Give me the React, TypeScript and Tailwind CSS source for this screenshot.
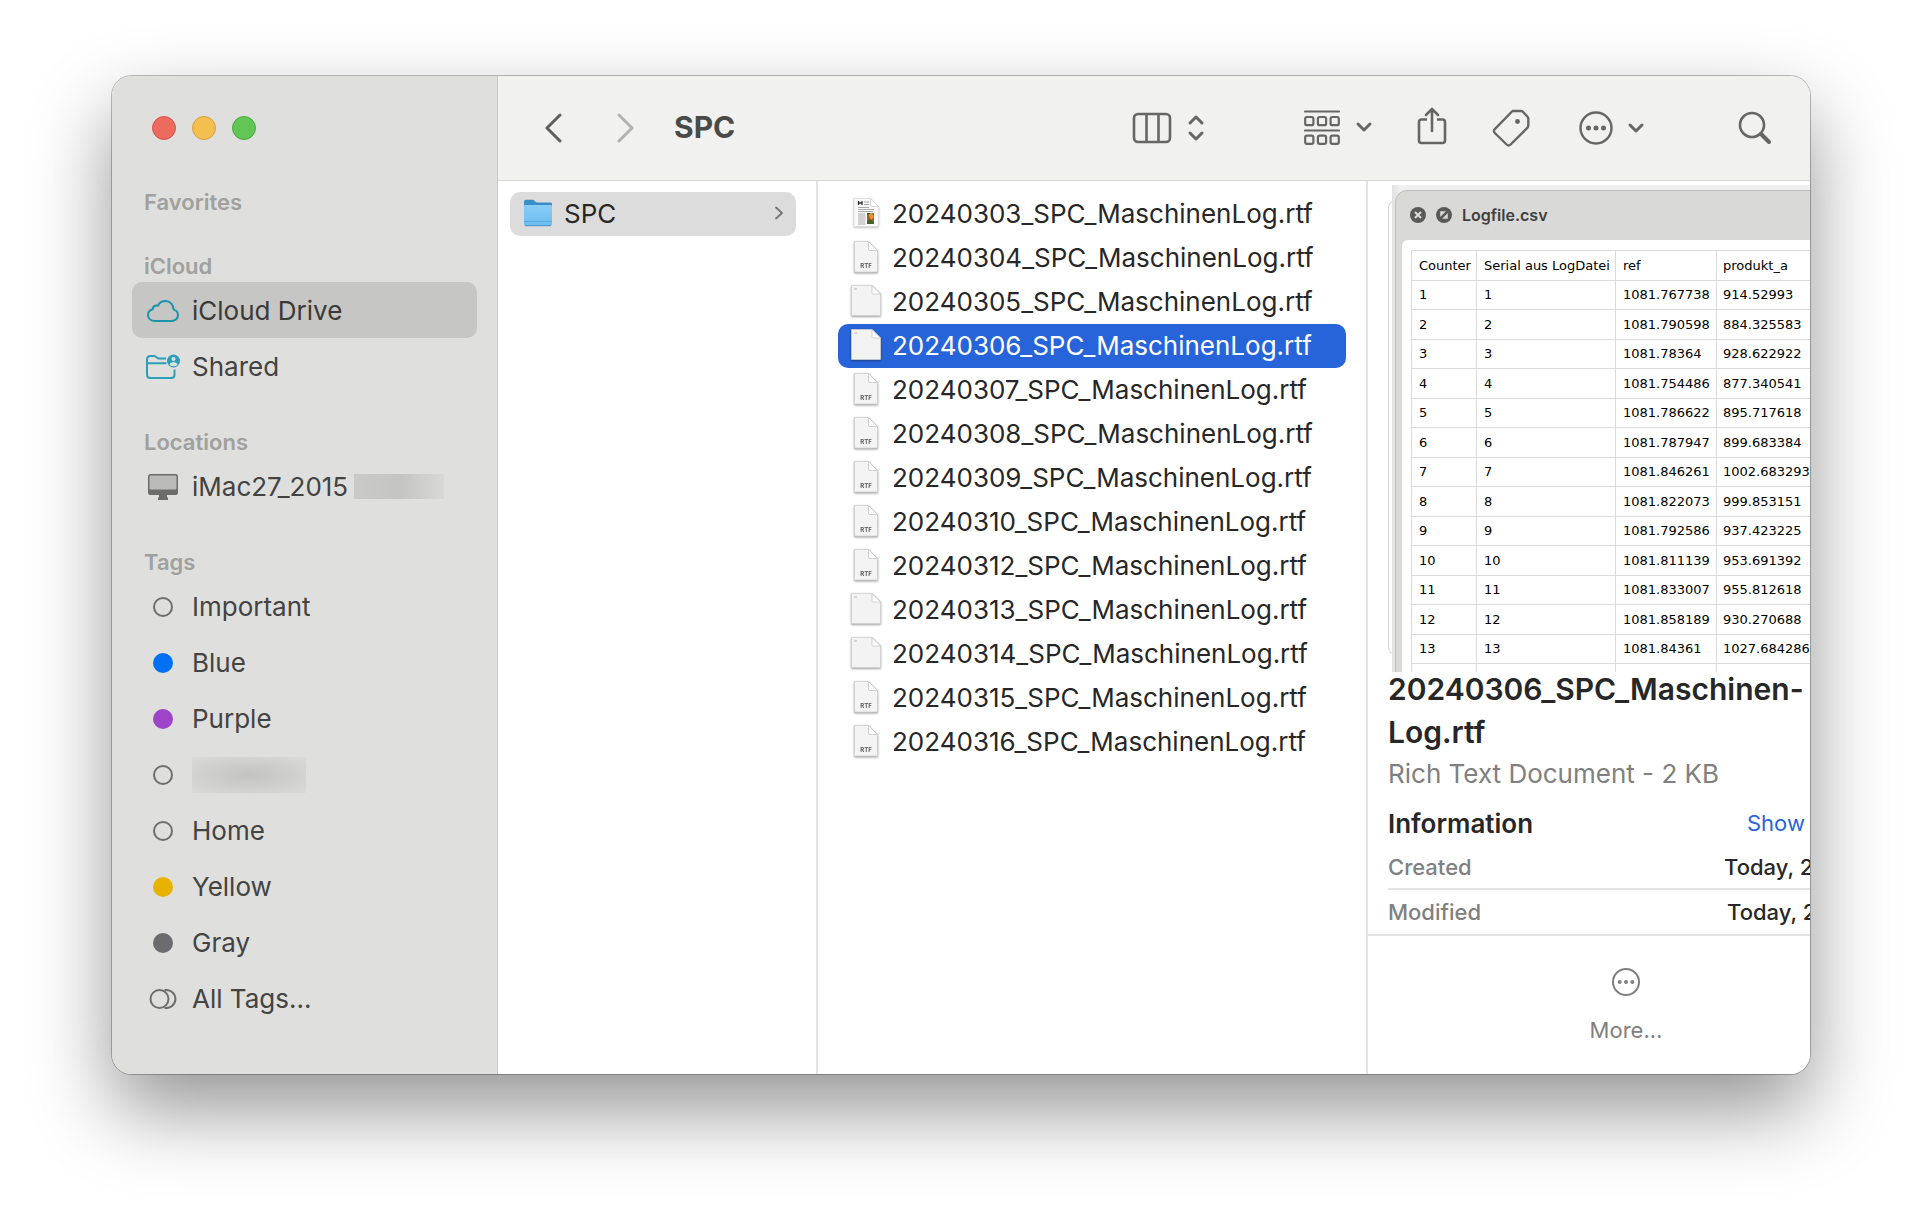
import { useState } from 'react';
import type { ReactNode } from 'react';

type FileKind = 'article' | 'rtf' | 'wide';

interface LogFile {
    name: string;
    kind: FileKind;
}

interface SidebarItem {
    label: string;
    icon: ReactNode;
    redacted?: 'text' | 'suffix';
}

const files: LogFile[] = [
    { name: '20240303_SPC_MaschinenLog.rtf', kind: 'article' },
    { name: '20240304_SPC_MaschinenLog.rtf', kind: 'rtf' },
    { name: '20240305_SPC_MaschinenLog.rtf', kind: 'wide' },
    { name: '20240306_SPC_MaschinenLog.rtf', kind: 'wide' },
    { name: '20240307_SPC_MaschinenLog.rtf', kind: 'rtf' },
    { name: '20240308_SPC_MaschinenLog.rtf', kind: 'rtf' },
    { name: '20240309_SPC_MaschinenLog.rtf', kind: 'rtf' },
    { name: '20240310_SPC_MaschinenLog.rtf', kind: 'rtf' },
    { name: '20240312_SPC_MaschinenLog.rtf', kind: 'rtf' },
    { name: '20240313_SPC_MaschinenLog.rtf', kind: 'wide' },
    { name: '20240314_SPC_MaschinenLog.rtf', kind: 'wide' },
    { name: '20240315_SPC_MaschinenLog.rtf', kind: 'rtf' },
    { name: '20240316_SPC_MaschinenLog.rtf', kind: 'rtf' },
];

const logRows = [
    ['1081.767738', '914.52993'],
    ['1081.790598', '884.325583'],
    ['1081.78364', '928.622922'],
    ['1081.754486', '877.340541'],
    ['1081.786622', '895.717618'],
    ['1081.787947', '899.683384'],
    ['1081.846261', '1002.683293'],
    ['1081.822073', '999.853151'],
    ['1081.792586', '937.423225'],
    ['1081.811139', '953.691392'],
    ['1081.833007', '955.812618'],
    ['1081.858189', '930.270688'],
    ['1081.84361', '1027.684286'],
];

const CloudIcon = () => (
    <svg width="34" height="24" viewBox="0 0 34 24" fill="none" stroke="#1a93ab" strokeWidth="2" strokeLinejoin="round">
        <path d="M9 22H25.500C29.300 22 32 19.400 32 16.200C32 13.300 30 11.200 27.600 10.600C27.500 5.600 24 2 19.400 2C15.800 2 13.200 3.900 12 6.700C9.300 5.900 6.900 7.500 6.600 10.300C4 11 2 13.100 2 16C2 19.500 4.900 22 9 22Z" />
    </svg>
);

const SharedIcon = () => (
    <svg width="34" height="26" viewBox="0 0 34 26" fill="none" stroke="#2a9fb8" strokeWidth="2">
        <path d="M20 4.500H12.500L9.500 2.500C9 2.200 8.500 2 8 2H4.500C2.500 2 1 3.300 1 5.500V20.500C1 22.500 2.500 24 4.500 24H25C27 24 28.500 22.500 28.500 20.500V15.500M1 9.200H20.500" />
        <circle cx="27.500" cy="7" r="6.500" fill="#2a9fb8" stroke="none" />
        <circle cx="27.500" cy="5" r="2.100" fill="#dfdfdd" stroke="none" />
        <path d="M23.500 11C24 8.800 25.600 8 27.500 8S31 8.800 31.500 11C29.500 12.600 25.500 12.600 23.500 11Z" fill="#dfdfdd" stroke="none" />
    </svg>
);

const MacIcon = () => (
    <svg width="32" height="28" viewBox="0 0 32 28">
        <rect x="1" y="1" width="30" height="21" rx="2.500" fill="#6c6c6b" />
        <rect x="2.500" y="2.500" width="27" height="14" rx="1" fill="#bbbbba" />
        <path d="M12 22H20V24.500H21V27H11V24.500H12Z" fill="#6c6c6b" />
    </svg>
);

const Dot = ({ color }: { color?: string }) => (
    <svg width="20" height="20" viewBox="0 0 20 20">
        {color ? <circle cx="10" cy="10" r="10" fill={color} /> : <circle cx="10" cy="10" r="9" fill="none" stroke="#6e6e6d" strokeWidth="2" />}
    </svg>
);

const AllTagsIcon = () => (
    <svg width="28" height="20" viewBox="0 0 28 20" fill="none" stroke="#6e6e6d" strokeWidth="2">
        <circle cx="10.500" cy="10" r="9" />
        <path d="M15.500 1.200A9 9 0 1 1 15.500 18.800" />
    </svg>
);

const ChevronDown = () => (
    <svg width="18" height="12" viewBox="0 0 18 12" fill="none" stroke="#666664" strokeWidth="3" strokeLinecap="round" strokeLinejoin="round">
        <path d="M3 3L9 9L15 3" />
    </svg>
);

const FolderIcon = () => (
    <svg width="30" height="30" viewBox="0 0 30 30">
        <defs>
            <linearGradient id="folder" x1="0" y1="0" x2="0" y2="1">
                <stop offset="0" stopColor="#87cdf8" />
                <stop offset="1" stopColor="#6cbdf0" />
            </linearGradient>
        </defs>
        <path d="M1 4C1 2.500 1.700 1.700 3 1.700H10C11.500 1.700 12 4.500 14 4.500H27.500C28.500 4.500 29 5 29 6V12H1Z" fill="#3a8ec9" />
        <path d="M1 8.500C1 7.500 1.500 7 2.500 7H27.500C28.500 7 29 7.500 29 8.500V26C29 27.300 28.300 28 27 28H3C1.700 28 1 27.300 1 26Z" fill="url(#folder)" />
        <path d="M1.300 23.500H28.700" stroke="#58a9de" />
        <path d="M2 27.700H28" stroke="#4d93c4" />
    </svg>
);

const FileIcon = ({ kind }: { kind: FileKind }) => {
    if (kind === 'wide') {
        return (
            <svg width="32" height="34" viewBox="0 0 32 34" className="drop-shadow-[0_1px_1px_rgba(0,0,0,0.4)]">
                <path d="M1.500 1.500H22L30.500 10V31.500H1.500Z" fill="#f3f3f3" stroke="#d0d0d0" strokeWidth="0.800" />
                <path d="M22 1.500V8.500Q22 10 23.500 10H30.500Z" fill="#fff" stroke="#c4c4c4" strokeWidth="0.800" />
                <path d="M4 5H7" stroke="#b5b5b5" />
            </svg>
        );
    }
    if (kind === 'article') {
        return (
            <svg width="28" height="32" viewBox="0 0 28 32" className="drop-shadow-[0_1px_1px_rgba(0,0,0,0.25)]">
                <path d="M2 1.500H18.500L26.500 9.500V29.500H2Z" fill="#fafafa" stroke="#dcdcdc" strokeWidth="0.800" />
                <path d="M18.500 1.500V8Q18.500 9.500 20 9.500H26.500Z" fill="#fff" stroke="#d0d0d0" strokeWidth="0.800" />
                <path d="M6.500 4V8M10 4V8M6.500 6H10" stroke="#333" strokeWidth="1.300" />
                <path d="M12 5H17M12 7.500H17M6 10.500H17M6 12.500H22M6 14.500H21M6 17H13.500M6 19H13.500M6 21H13.500M6 23H13.500M6 25H13.500M6 27H13.500" stroke="#a9a9a9" />
                <path d="M15 16H22V27H15Z" fill="#a4631f" />
                <path d="M16 17L20 16L22 20L19 23Z" fill="#e8922a" />
                <path d="M15 16H18L16 19ZM15 24L18 22L22 25V27H15Z" fill="#47612c" />
            </svg>
        );
    }
    return (
        <svg width="26" height="34" viewBox="0 0 26 34" className="drop-shadow-[0_1px_1px_rgba(0,0,0,0.4)]">
            <path d="M1.500 1.500H15.500L24.500 10.500V32H1.500Z" fill="#f4f4f4" stroke="#cecece" strokeWidth="0.800" />
            <path d="M15.500 1.500V9Q15.500 10.500 17 10.500H24.500Z" fill="#fff" stroke="#c4c4c4" strokeWidth="0.800" />
            <text x="13" y="28" textAnchor="middle" fontSize="6" fontWeight="700" fill="#5a5a5a">RTF</text>
        </svg>
    );
};

const sections: { title: string; items: SidebarItem[] }[] = [
    { title: 'Favorites', items: [] },
    {
        title: 'iCloud',
        items: [
            { label: 'iCloud Drive', icon: <CloudIcon /> },
            { label: 'Shared', icon: <SharedIcon /> },
        ],
    },
    { title: 'Locations', items: [{ label: 'iMac27_2015', icon: <MacIcon />, redacted: 'suffix' }] },
    {
        title: 'Tags',
        items: [
            { label: 'Important', icon: <Dot /> },
            { label: 'Blue', icon: <Dot color="#0070f5" /> },
            { label: 'Purple', icon: <Dot color="#9d44c8" /> },
            { label: '', icon: <Dot />, redacted: 'text' },
            { label: 'Home', icon: <Dot /> },
            { label: 'Yellow', icon: <Dot color="#e7b200" /> },
            { label: 'Gray', icon: <Dot color="#6c6c70" /> },
            { label: 'All Tags...', icon: <AllTagsIcon /> },
        ],
    },
];

const Sidebar = () => {
    const [active, setActive] = useState('iCloud Drive');

    return (
        <aside className="w-[386px] shrink-0 bg-[#dfdfdd] border-r border-[#c9c9c7] px-5 pt-10 pb-12">
            <div className="flex gap-4 pl-5">
                <button aria-label="Close" className="size-6 rounded-full bg-[#ed6a5f] border border-[#d5544a]" />
                <button aria-label="Minimize" className="size-6 rounded-full bg-[#f5bf50] border border-[#d8a13c]" />
                <button aria-label="Zoom" className="size-6 rounded-full bg-[#62c656] border border-[#4ca93f]" />
            </div>

            <nav className="mt-[46px] flex flex-col gap-8">
                {sections.map(section => (
                    <section key={section.title}>
                        <h2 className="h-8 leading-8 pl-3 text-[22px] font-semibold text-[#a0a09e]">{section.title}</h2>
                        {section.items.map((item, i) => (
                            <button
                                key={i}
                                aria-label={item.label || 'Tag'}
                                onClick={() => setActive(item.label)}
                                className={`w-full h-14 pl-[14px] pt-px flex items-center rounded-[10px] text-[26px] text-left ${item.label === active ? 'bg-[#c6c6c4] text-[#3a3a39]' : 'text-[#434342]'}`}
                            >
                                <span className="w-[34px] mr-3 flex justify-center shrink-0">{item.icon}</span>
                                {item.label}
                                {item.redacted === 'suffix' && <span className="ml-[6px] w-[90px] h-[25px] bg-linear-to-r from-[#cacac8] via-[#c4c4c2] to-[#d8d8d6]" />}
                                {item.redacted === 'text' && <span className="w-[114px] h-9 bg-radial from-[#c3c3c1] to-[#dadad8]" />}
                            </button>
                        ))}
                    </section>
                ))}
            </nav>
        </aside>
    );
};

const Toolbar = () => (
    <header className="h-[105px] shrink-0 flex items-center bg-[#f1f1ef] border-b border-[#d6d6d5] pl-[46px] pr-[38px] pb-px">
        <button aria-label="Back">
            <svg width="18" height="30" viewBox="0 0 18 30" fill="none" stroke="#5f5f5e" strokeWidth="3" strokeLinecap="round" strokeLinejoin="round">
                <path d="M16 2L3 15L16 28" />
            </svg>
        </button>
        <button aria-label="Forward" className="ml-[55px]">
            <svg width="18" height="30" viewBox="0 0 18 30" fill="none" stroke="#b3b3b2" strokeWidth="3" strokeLinecap="round" strokeLinejoin="round">
                <path d="M2 2L15 15L2 28" />
            </svg>
        </button>
        <h1 className="ml-[39px] text-[30px] font-bold text-[#4a4a49]">SPC</h1>

        <button aria-label="View as columns" className="ml-auto flex items-center gap-[15px]">
            <svg width="40" height="32" viewBox="0 0 40 32" fill="none" stroke="#666664" strokeWidth="2.600">
                <rect x="2" y="2" width="36" height="28" rx="4" />
                <path d="M14.500 2V30M26.500 2V30" />
            </svg>
            <svg width="18" height="28" viewBox="0 0 18 28" fill="none" stroke="#666664" strokeWidth="3" strokeLinecap="round" strokeLinejoin="round">
                <path d="M3 9L9 3L15 9M3 19L9 25L15 19" />
            </svg>
        </button>
        <button aria-label="Group" className="mb-[2px] ml-[99px] flex items-center gap-[15px]">
            <svg width="36" height="36" viewBox="0 0 36 36" fill="none" stroke="#666664" strokeWidth="2.200">
                <path d="M1 2.500H35M1 21.500H35" strokeLinecap="round" />
                <rect x="1.200" y="8" width="8.200" height="8.200" rx="1.800" />
                <rect x="13.900" y="8" width="8.200" height="8.200" rx="1.800" />
                <rect x="26.600" y="8" width="8.200" height="8.200" rx="1.800" />
                <rect x="1.200" y="26.700" width="8.200" height="8.200" rx="1.800" />
                <rect x="13.900" y="26.700" width="8.200" height="8.200" rx="1.800" />
                <rect x="26.600" y="26.700" width="8.200" height="8.200" rx="1.800" />
            </svg>
            <ChevronDown />
        </button>
        <button aria-label="Share" className="ml-11 mb-1">
            <svg width="30" height="38" viewBox="0 0 30 38" fill="none" stroke="#666664" strokeWidth="2.600" strokeLinecap="round" strokeLinejoin="round">
                <path d="M10 12.500H4.500C3 12.500 2 13.500 2 15V33.500C2 35 3 36 4.500 36H25.500C27 36 28 35 28 33.500V15C28 13.500 27 12.500 25.500 12.500H20" strokeLinecap="butt" />
                <path d="M15 24V2M9 8L15 2L21 8" />
            </svg>
        </button>
        <button aria-label="Tags" className="ml-[45px]">
            <svg width="38" height="38" viewBox="0 0 38 38" fill="none" stroke="#666664" strokeWidth="2.400" strokeLinejoin="round">
                <path d="M20.500 2H29C29.800 2 30.300 2.200 30.800 2.700L35.600 7.800C36.100 8.300 36.300 8.800 36.300 9.500V16.500C36.300 17.500 36 18.200 35.300 18.900L18.600 35.500C17.400 36.700 15.800 36.700 14.600 35.500L2.800 24C1.600 22.800 1.600 21.400 2.800 20.200L20.500 2Z" />
                <circle cx="25.500" cy="12.500" r="2.400" fill="#666664" stroke="none" />
            </svg>
        </button>
        <button aria-label="Actions" className="ml-[49px] flex items-center gap-[14px]">
            <svg width="34" height="34" viewBox="0 0 34 34" fill="none" stroke="#666664" strokeWidth="2.400">
                <circle cx="17" cy="17" r="15.500" />
                <g fill="#666664" stroke="none">
                    <circle cx="9.500" cy="17" r="2.500" />
                    <circle cx="17" cy="17" r="2.500" />
                    <circle cx="24.500" cy="17" r="2.500" />
                </g>
            </svg>
            <ChevronDown />
        </button>
        <button aria-label="Search" className="ml-[93px]">
            <svg width="34" height="34" viewBox="0 0 34 34" fill="none" stroke="#666664" strokeLinecap="round">
                <circle cx="14" cy="14" r="12" strokeWidth="2.600" />
                <path d="M23 23L31 31" strokeWidth="4" />
            </svg>
        </button>
    </header>
);

const LogPreview = () => (
    <div className="relative pl-[4px]">
        {/* Edge of the page that the log window was pasted onto */}
        <div className="absolute left-0 top-[15px] bottom-[17px] w-3 rounded-l-lg border border-r-0 border-[#d8d8d8]" />
        <div className="relative h-[487px] overflow-hidden bg-linear-to-r from-[#e2e2e2] to-[#efefef] to-[8px] pl-[3px] pt-[5px]">
            <div className="w-[700px] rounded-tl-xl border border-[#bdbdbc] bg-[#d9d9d7] pl-[6px]">
                <div className="h-[49px] flex items-center gap-[10px] pl-2 pb-[2px] text-[#5a5a59]">
                    <svg width="16" height="16" viewBox="0 0 16 16">
                        <circle cx="8" cy="8" r="8" fill="currentColor" />
                        <path d="M5 5L11 11M11 5L5 11" stroke="#dedede" strokeWidth="2" />
                    </svg>
                    <svg width="16" height="16" viewBox="0 0 16 16">
                        <circle cx="8" cy="8" r="8" fill="currentColor" />
                        <path d="M4.200 10V4.200H10ZM11.800 6V11.800H6Z" fill="#d9d9d7" />
                        <path d="M3.500 12.500L12.500 3.500" stroke="#5a5a59" strokeWidth="1.800" />
                    </svg>
                    <span className="text-base font-semibold text-[#3f3f3e]">Logfile.csv</span>
                </div>
                <div className="h-[440px] overflow-hidden rounded-tl-md bg-white pl-[9px] pt-[10px]">
                    <table className="table-fixed w-[440px] border-collapse font-['DejaVu_Sans',sans-serif] text-[13px] leading-4 text-black">
                        <thead>
                            <tr className="h-[30px]">
                                <th className="w-[65px] border border-[#dadada] pl-[7px] font-normal text-left">Counter</th>
                                <th className="w-[139px] border border-[#dadada] pl-[7px] font-normal text-left whitespace-nowrap">Serial aus LogDatei</th>
                                <th className="w-[101px] border border-[#dadada] pl-[7px] font-normal text-left">ref</th>
                                <th className="border border-[#dadada] pl-[6px] font-normal text-left">produkt_a</th>
                            </tr>
                        </thead>
                        <tbody>
                            {logRows.map(([ref, produkt], i) => (
                                <tr key={i} className="odd:h-[29px] even:h-[30px]">
                                    <td className="border border-[#dadada] pl-[7px]">{i + 1}</td>
                                    <td className="border border-[#dadada] pl-[7px]">{i + 1}</td>
                                    <td className="border border-[#dadada] pl-[7px]">{ref}</td>
                                    <td className="border border-[#dadada] pl-[6px]">{produkt}</td>
                                </tr>
                            ))}
                            <tr className="h-[30px]">
                                <td className="border border-[#dadada]" />
                                <td className="border border-[#dadada]" />
                                <td className="border border-[#dadada]" />
                                <td className="border border-[#dadada]" />
                            </tr>
                        </tbody>
                    </table>
                </div>
            </div>
        </div>
    </div>
);

const Preview = () => (
    <section className="flex-1 min-w-0 flex flex-col overflow-hidden bg-white">
        <div className="pl-5 pt-1 overflow-hidden">
            <LogPreview />
            <div className="whitespace-nowrap">
                <h2 className="leading-[43px] -mt-1 text-[30px] font-semibold text-[#272727]">
                    20240306_SPC_Maschinen-
                    <br />
                    Log.rtf
                </h2>
                <p className="leading-10 text-[26px] text-[#808080]">Rich Text Document - 2 KB</p>
                <div className="mt-[6px] h-[46px] grid grid-cols-[359px_1fr] items-center">
                    <h3 className="text-[26px] font-semibold text-[#272727]">Information</h3>
                    <a href="#more" className="text-[22px] text-[#2864d9]">Show</a>
                </div>
                <dl className="text-[22px] font-medium">
                    <div className="h-11 grid grid-cols-[336px_1fr] items-center border-b-2 border-[#e4e4e4]">
                        <dt className="text-[#808080]">Created</dt>
                        <dd className="text-[#272727]">Today, 2</dd>
                    </div>
                    <div className="h-11 grid grid-cols-[339px_1fr] items-center">
                        <dt className="text-[#808080]">Modified</dt>
                        <dd className="text-[#272727]">Today, 2</dd>
                    </div>
                </dl>
            </div>
        </div>
        <footer className="flex-1 border-t-2 border-[#e4e4e4] flex justify-center pl-[74px] pt-8">
            <button className="flex flex-col items-center self-start gap-[18px] text-[22px] text-[#808080]">
                <svg width="28" height="28" viewBox="0 0 28 28" fill="none" stroke="currentColor" strokeWidth="2">
                    <circle cx="14" cy="14" r="13" />
                    <g fill="currentColor" stroke="none">
                        <circle cx="7.700" cy="14" r="2" />
                        <circle cx="14" cy="14" r="2" />
                        <circle cx="20.300" cy="14" r="2" />
                    </g>
                </svg>
                More...
            </button>
        </footer>
    </section>
);

export default function App() {
    const [selected, setSelected] = useState('20240306_SPC_MaschinenLog.rtf');

    return (
        <div className="min-h-screen bg-white px-28 pt-[76px] pb-[148px] font-[Inter,sans-serif]">
            <main className="flex overflow-hidden rounded-[20px] shadow-[0_0_0_1px_rgba(0,0,0,0.25),0_36px_80px_rgba(0,0,0,0.42)]">
                <Sidebar />
                <div className="flex-1 min-w-0 flex flex-col">
                    <Toolbar />
                    <div className="flex-1 flex min-h-0">
                        {/* Folder column */}
                        <div className="w-80 shrink-0 bg-white border-r-2 border-[#e4e4e4] pl-3 pr-5 pt-[11px]">
                            <button className="w-full h-11 px-3 pb-[2px] flex items-center gap-[10px] rounded-[10px] bg-[#dcdcdc] text-[26px] text-[#272727]">
                                <span className="w-8 flex justify-center"><FolderIcon /></span>
                                SPC
                                <svg width="10" height="14" viewBox="0 0 10 14" className="ml-auto" fill="none" stroke="#757575" strokeWidth="1.800" strokeLinecap="round" strokeLinejoin="round">
                                    <path d="M2 1.500L8 7L2 12.500" />
                                </svg>
                            </button>
                        </div>

                        {/* File column */}
                        <ul className="w-[550px] shrink-0 bg-white border-r-2 border-[#e4e4e4] px-5 pt-[11px]">
                            {files.map(file => (
                                <li key={file.name}>
                                    <button
                                        onClick={() => setSelected(file.name)}
                                        className={`w-full h-11 pl-3 pb-[2px] flex items-center gap-[10px] rounded-[10px] text-[26px] whitespace-nowrap ${file.name === selected ? 'bg-[#2864d9] text-white' : 'text-[#272727]'}`}
                                    >
                                        <span className="w-8 flex justify-center shrink-0"><FileIcon kind={file.kind} /></span>
                                        {file.name}
                                    </button>
                                </li>
                            ))}
                        </ul>

                        <Preview />
                    </div>
                </div>
            </main>
        </div>
    );
}
